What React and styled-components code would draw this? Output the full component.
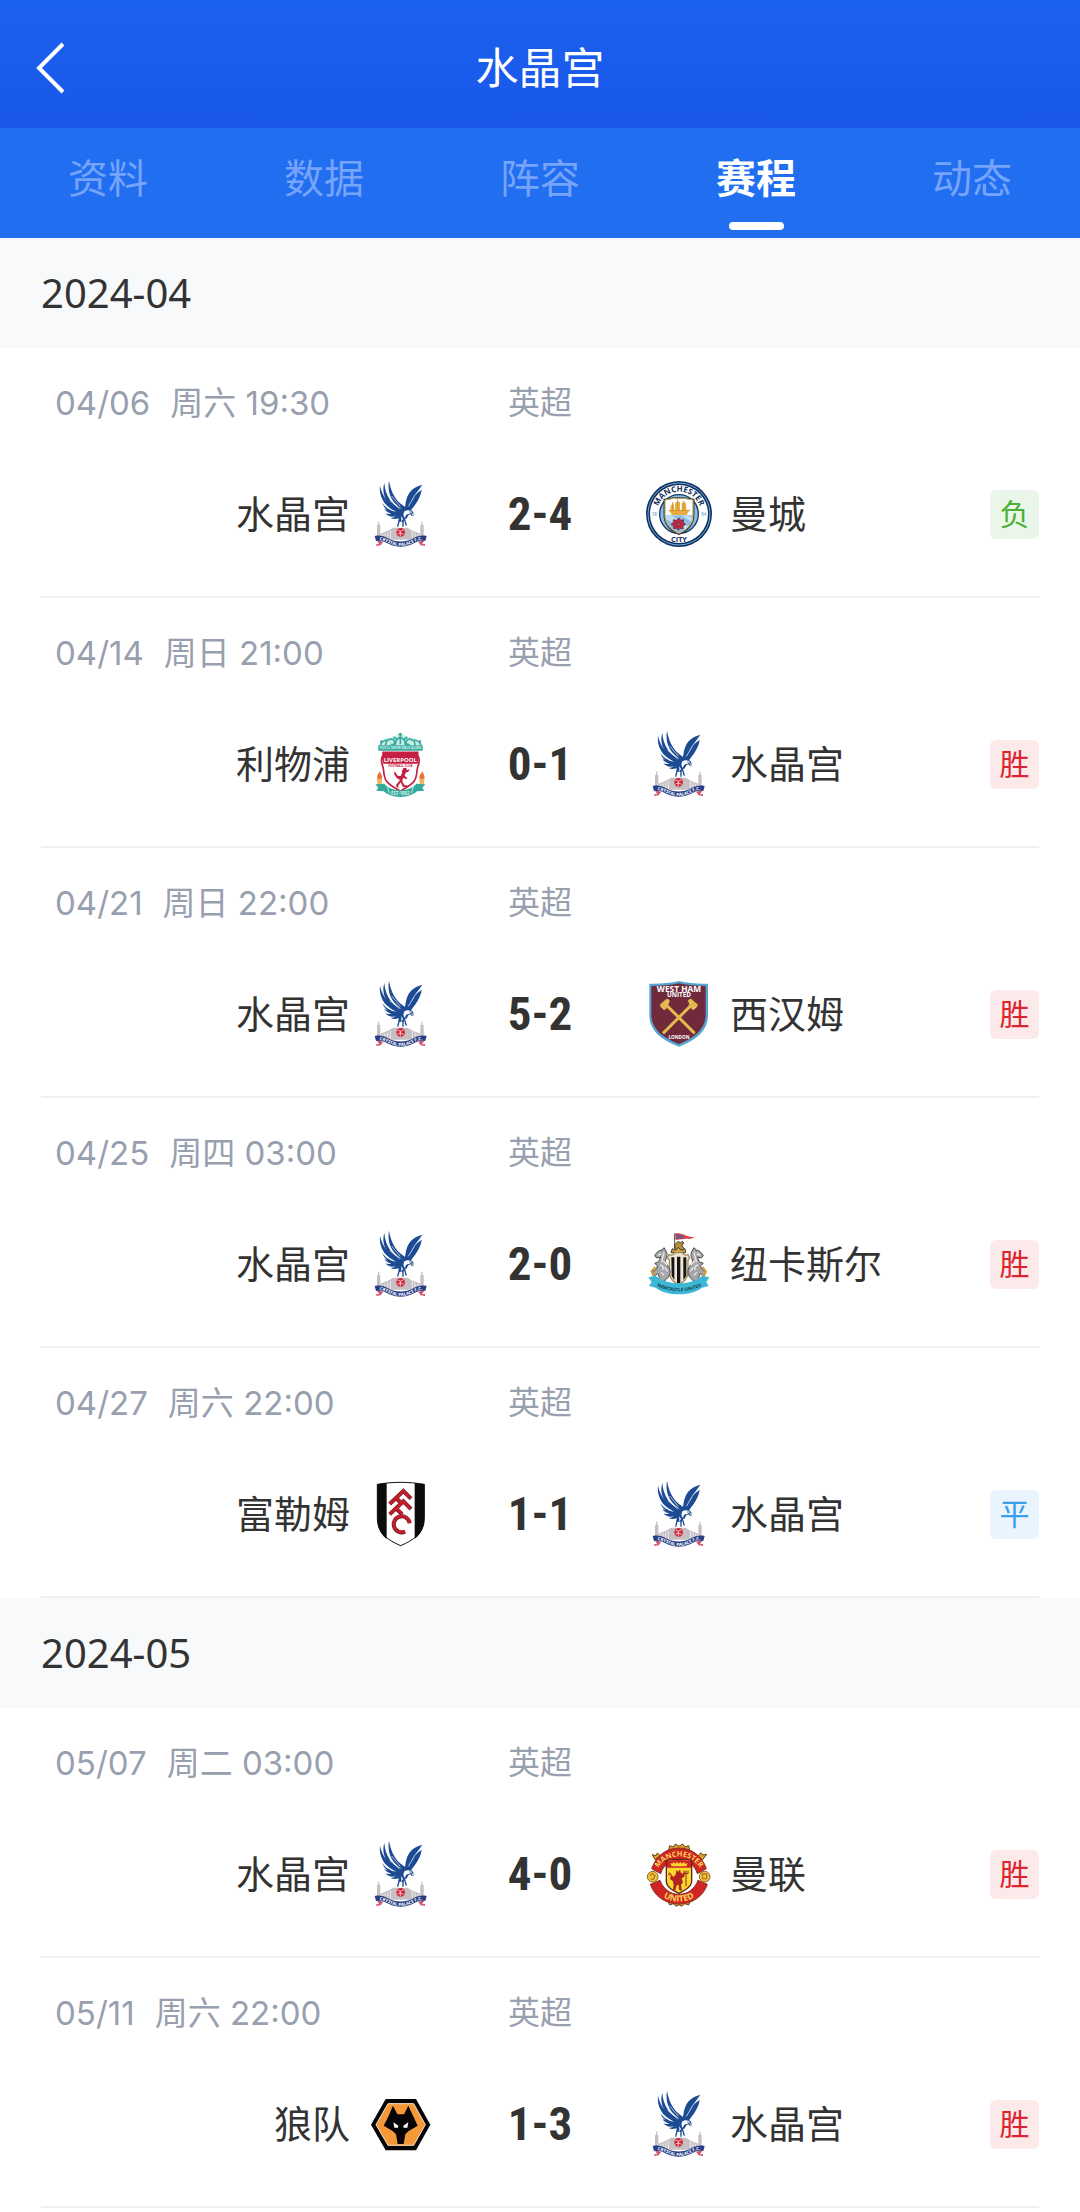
import React from "react";
import styled, { createGlobalStyle } from "styled-components";

const GlobalStyle = createGlobalStyle`
  * {
    box-sizing: border-box;
    margin: 0;
    padding: 0;
  }

  body {
    background-color: #fff;
    color: #333;
    font-family: Inter, "Noto Sans CJK SC", sans-serif;
  }

  button {
    border: none;
    background: none;
    font: inherit;
    cursor: pointer;
  }
`;

const Header = styled.header`
  display: grid;
  grid-template-columns: 1fr auto 1fr;
  align-items: center;
  padding: 36px 24px 28px;
  background: linear-gradient(#1c61ed, #1857e9);
  color: #fff;
`;

const BackButton = styled.button`
  display: flex;
  justify-self: start;
  padding: 4px 8px;
  color: inherit;
`;

const Title = styled.h1`
  font-size: 43px;
  font-weight: 400;
  line-height: 64px;
`;

const Tabs = styled.nav`
  display: grid;
  grid-template-columns: repeat(5, 1fr);
  background-color: #216ef1;
`;

const Tab = styled.button`
  display: flex;
  flex-direction: column;
  align-items: center;
  gap: 15px;
  padding: 23px 0 8px;
  color: ${(props) => (props.$active ? "#fff" : "#75a4fa")};
  font-size: 40px;
  font-weight: ${(props) => (props.$active ? 700 : 400)};
  line-height: 56px;

  &::after {
    content: "";
    width: 55px;
    height: 8px;
    border-radius: 4px;
    background-color: ${(props) => (props.$active ? "#fff" : "transparent")};
  }
`;

const MonthTitle = styled.h2`
  padding: 27px 41px;
  background-color: #f7f9fb;
  font-family: "Noto Sans", sans-serif;
  font-size: 40px;
  font-weight: 400;
  line-height: 56px;
`;

const MatchList = styled.ul`
  list-style: none;
  padding: 0 41px;
`;

const Match = styled.li`
  padding: 33px 0 49px;
  border-bottom: 2px solid #f0f1f3;
`;

const Columns = styled.div`
  display: grid;
  grid-template-columns: 1fr 212px 1fr;
  align-items: center;
`;

const Meta = styled(Columns)`
  margin-bottom: 56px;
  color: #989fae;
  font-size: 33px;
  line-height: 44px;
`;

const Kickoff = styled.time`
  display: flex;
  gap: 20px;
  padding-left: 14px;
`;

const League = styled.span`
  font-size: 32px;
  text-align: center;
`;

const HomeTeam = styled.div`
  display: flex;
  align-items: center;
  justify-content: flex-end;
  gap: 18px;
`;

const AwayTeam = styled.div`
  display: flex;
  align-items: center;
  gap: 18px;
`;

const TeamName = styled.span`
  font-size: 38px;
  line-height: 56px;
`;

const Score = styled.strong`
  font-family: "Roboto Condensed", Roboto, sans-serif;
  font-size: 47px;
  font-weight: 700;
  line-height: 56px;
  text-align: center;
`;

const resultColors = {
  胜: { text: "#da2630", back: "#fce9ea" },
  平: { text: "#3a9fe8", back: "#e9f4fe" },
  负: { text: "#4bb034", back: "#ebf6ea" },
};

const Result = styled.span`
  width: 49px;
  margin-left: auto;
  border-radius: 6px;
  background-color: ${(props) => resultColors[props.$result].back};
  color: ${(props) => resultColors[props.$result].text};
  font-size: 30px;
  line-height: 49px;
  text-align: center;
`;

const Crest = styled.svg`
  display: block;
  flex: none;
  width: 66px;
  height: 66px;
  font-family: "Open Sans", sans-serif;
  font-weight: 700;
`;

function PalaceCrest() {
  return (
    <Crest viewBox="23 46 198 198" aria-hidden="true">
      <g fill="#c5bfc4">
        <path d="M50 178h10v38H50zM180 178h10v38h-10z" />
        <path d="M53 168h4v12h-4zM183 168h4v12h-4z" />
        <path d="M60 204l26-10 12-8h44l12 8 26 10v18H60z" />
      </g>
      <path
        d="M66 206v12m8-15v17m8-19v21m8-26v28m66-28v28m8-23v22m8-18v16m8-13v12"
        stroke="#eeebee"
        strokeWidth="3"
      />
      <g fill="#1c4a93">
        <path d="M86 45c-4 24 0 46 14 63 9 11 22 20 33 29l8-9c-15-9-28-18-37-33-9-14-15-31-18-50z" />
        <path d="M72 52c-7 23-1 44 12 60 12 14 29 23 44 31l5-8c-18-9-35-18-45-34-9-14-15-30-16-49z" />
        <path d="M59 60c-3 23 6 44 19 58 12 13 27 19 44 26l4-7c-19-8-34-17-45-31-10-13-19-28-22-46z" />
        <path d="M66 112c11 17 28 24 48 30l7 6c-22-1-47-11-55-36z" />
        <path d="M186 57c-25 7-38 19-45 36-5 12-6 25-8 39l10 1c3-15 9-29 18-42 8-11 18-23 25-34z" />
        <path d="M184 72c-19 13-30 27-36 41-3 7-4 14-5 22l7 1c13-17 31-38 34-64z" />
        <path d="M173 101c-10 14-21 24-29 36l-6-5c8-15 20-27 35-31z" />
        <path d="M113 136c-13 3-27 0-41-6 5 8 13 12 21 14-6 1-12 1-18-1 8 10 20 12 31 9-5 4-10 5-15 5 11 6 25 2 35-7l12 10 8-15z" />
        <path d="M119 136c10-9 26-9 36-1 5 4 5 8 4 13l-4 4-5-6-11 4c-1 8-6 13-11 18h-13c0-10-2-18 4-32z" />
      </g>
      <path
        d="M133 136c9-4 20-2 22 4l-9 5c-8 0-11 5-12 12-6-6-6-14-1-21zM123 151l5 9-5 8z"
        fill="#fff"
      />
      <path
        d="M118 130l-30-26m56 18l18-29m-42 29l-26-31"
        stroke="#fff"
        strokeWidth="2"
      />
      <circle cx="149" cy="139" r="2" fill="#1c4a93" />
      <path d="M155 141c5 1 7 5 4 12l-6-7z" fill="#adb0b8" />
      <path
        d="M117 163l-5 20m16-20v20m5-20l5 17"
        stroke="#1c4a93"
        strokeWidth="4"
      />
      <circle cx="121" cy="200" r="13" fill="#d3263a" />
      <path
        d="M112 193l8 4 10-5m-10 5v15m-8-7l8-3 10 4"
        stroke="#fff"
        strokeWidth="2"
        fill="none"
      />
      <path
        d="M47 220l10 16-9-1v6l13-2 7-10zM195 220l-10 16 9-1v6l-13-2-7-10z"
        fill="#d3546d"
      />
      <path
        d="M43 211c17-3 27 0 40 7 25 13 51 13 76 0 13-7 23-10 40-7l-4 15c-15-2-24 1-37 8-24 12-50 12-74 0-13-7-22-10-37-8z"
        fill="#293f85"
      />
      <path
        id="palaceBanner"
        d="M53 223c11 0 20 3 32 9 24 12 48 12 72 0 12-6 21-9 34-9"
        fill="none"
      />
      <text fill="#fff" fontSize="13">
        <textPath href="#palaceBanner" startOffset="50%" textAnchor="middle">
          CRYSTAL PALACE F.C.
        </textPath>
      </text>
    </Crest>
  );
}

function CityCrest() {
  return (
    <Crest viewBox="33 46 198 198" aria-hidden="true">
      <circle cx="132" cy="145" r="99" fill="#0d305f" />
      <circle cx="132" cy="145" r="93" fill="none" stroke="#78a9d6" strokeWidth="3" />
      <circle cx="132" cy="145" r="87" fill="#fff" />
      <circle cx="132" cy="145" r="58" fill="#8dbce5" stroke="#163963" strokeWidth="4" />
      <path
        d="M88 102c30-8 58-8 88 0v46c0 28-18 46-44 58-26-12-44-30-44-58z"
        fill="#fff"
        stroke="#303a45"
        strokeWidth="5"
      />
      <path d="M91 149h82c0 26-17 42-41 53-24-11-41-27-41-53z" fill="#8dbce5" />
      <path d="M91 150h20l49 32-8 9-58-30zM140 150h20l12 7v13z" fill="#c2ddf4" />
      <path
        d="M90 103c29-7 55-7 84 0v45c0 27-17 44-42 55-25-11-42-28-42-55z"
        fill="none"
        stroke="#cfb45f"
        strokeWidth="3"
      />
      <path
        d="M104 136h58l-7 12h-45zM108 118l9-2v18h-12zM121 110l14-2v26h-16zM140 113l12-3 3 24h-15z"
        fill="#e7ad40"
      />
      <path
        d="M113 109v28m15-36v36m17-31v31M101 135l64-1"
        stroke="#d2932e"
        strokeWidth="3"
      />
      <path
        d="M132 157l5 7 9-2-1 9 7 5-8 5v8l-9-1-5 6-5-6-9 1v-8l-8-5 7-5v-9l9 2z"
        fill="#bd2843"
        stroke="#4e2439"
        strokeWidth="2"
      />
      <circle cx="131" cy="176" r="5" fill="#e3475c" stroke="#4e2439" strokeWidth="2" />
      <path id="cityTop" d="M68 154a65 65 0 1 1 128 0" fill="none" />
      <text fill="#122f57" fontSize="24">
        <textPath href="#cityTop" startOffset="50%" textAnchor="middle">
          MANCHESTER
        </textPath>
      </text>
      <text x="132" y="228" fill="#122f57" fontSize="22" textAnchor="middle">
        CITY
      </text>
      <g fill="#8ab4da" fontSize="13" textAnchor="middle">
        <text x="58" y="151">18</text>
        <text x="206" y="151">94</text>
      </g>
    </Crest>
  );
}

function LiverpoolCrest() {
  return (
    <Crest viewBox="21 33 198 198" aria-hidden="true">
      <path d="M56 78c5-19 20-25 40-26 5-2 10-6 22-12 13 6 17 10 22 12 20 1 35 7 40 26z" fill="#c9efe8" />
      <g fill="none" stroke="#36aa9c" strokeWidth="5">
        <path d="M58 77c2-12 11-16 21-17m101 17c-2-12-11-16-21-17" />
        <path d="M74 75c0-17 20-23 26-12 4 9-5 14-10 9m72 3c0-17-20-23-26-12-4 9 5 14 10 9" />
        <path d="M103 75c0-13 6-20 15-23 9 3 15 10 15 23m-15-31v29M97 51l9 6m33-6l-9 6" />
      </g>
      <circle cx="118" cy="43" r="5" fill="#36aa9c" />
      <circle cx="61" cy="65" r="4" fill="#36aa9c" />
      <circle cx="177" cy="65" r="4" fill="#36aa9c" />
      <path d="M52 76h133v16H52z" fill="#36aa9c" />
      <text x="118" y="88" fill="#d4f2ec" fontSize="9" textAnchor="middle">
        YOU&apos;LL NEVER WALK ALONE
      </text>
      <path
        d="M66 97h104v10c8 8 5 21 0 34-4 16-1 30-11 43-10 14-27 21-41 29-14-8-31-15-41-29-10-13-7-27-11-43-5-13-8-26 0-34z"
        fill="#fff"
        stroke="#c51f43"
        strokeWidth="5"
      />
      <path d="M67 98h102v8c5 8 4 17 1 25H67c-4-10-6-18 0-25z" fill="#c51f43" />
      <text x="118" y="125" fill="#fff" fontSize="18" textAnchor="middle">
        LIVERPOOL
      </text>
      <text x="118" y="142" fill="#c51f43" fontSize="9" textAnchor="middle">
        FOOTBALL CLUB
      </text>
      <path
        d="M126 145c8-4 12 0 12 6l8-4-4 8-8 3-3 10 9 7-6 2-8-4-2 12 7 11h9l-2 5h-12l-7-14-8 11 3 6-7-2-2-7 12-15-10-6-8-12 2-8 9 13 9 1 5-11c-3-3-2-6 2-8z"
        fill="#c51f43"
      />
      <path d="M47 175h17l-3 20H50zM174 175h17l-3 20h-11z" fill="#edb760" />
      <path
        d="M50 176c-4-9 2-12 5-22 4 8 10 12 8 22zM177 176c-4-9 2-12 7-22 3 8 8 13 6 22z"
        fill="#e76f3a"
      />
      <path
        d="M43 193l27-2c10 12 26 19 48 20 22-1 38-8 48-20l27 2-9 10 6 9-22 2c-14 12-30 17-50 17s-36-5-50-17l-22-2 6-9z"
        fill="#36aa9c"
      />
      <path d="M77 193l8 27m74-27l-8 27" stroke="#bde8df" strokeWidth="3" />
      <text x="118" y="226" fill="#d4f2ec" fontSize="13" textAnchor="middle">
        EST·1892
      </text>
    </Crest>
  );
}

function WestHamCrest() {
  return (
    <Crest viewBox="33 48 198 198" aria-hidden="true">
      <path
        d="M43 56c29 1 62-1 89-8 27 7 58 9 87 8v95c0 48-39 76-87 94-48-18-89-46-89-94z"
        fill="#54a4d1"
      />
      <path
        d="M49 63c30 0 58-2 83-8 26 6 53 8 80 8v86c0 45-36 70-80 88-45-18-83-43-83-88z"
        fill="#702a3c"
      />
      <g fill="#fff" textAnchor="middle">
        <text x="132" y="81" fontSize="25">WEST HAM</text>
        <text x="132" y="97" fontSize="19">UNITED</text>
        <text x="132" y="222" fontSize="14">LONDON</text>
      </g>
      <path d="M92 118l87 87M171 118l-87 87" stroke="#e5b84b" strokeWidth="9" />
      <path
        d="M74 119l21-18c5 1 9 4 10 8l-13 14 5 6-10 7-5-7zM189 119l-21-18c-5 1-9 4-10 8l13 14-5 6 10 7 5-7z"
        fill="#e5b84b"
      />
      <path
        d="M76 123l9 8m9-20l8 7m85 5l-9 8m-9-20l-8 7"
        stroke="#f6dc88"
        strokeWidth="3"
      />
    </Crest>
  );
}

function NewcastleCrest() {
  return (
    <Crest viewBox="33 33 198 198" aria-hidden="true">
      <path d="M119 40v46" stroke="#5b4b3b" strokeWidth="3" />
      <path d="M121 40c14-2 24 3 38 9l21 4-17 4c-16-3-27 3-42 2z" fill="#db4047" />
      <path d="M122 42l23 14m0-9l-21 9" stroke="#45639c" strokeWidth="4" />
      <path d="M121 95l-2-20 9-10 9 3 5-4 4 5-5 8 5 8-3 11z" fill="#b58e42" stroke="#493a29" strokeWidth="3" />
      <path d="M108 98l4-12 9 5 9-9 9 9 11-5 2 12z" fill="#d5a445" stroke="#403a35" strokeWidth="3" />
      <path
        d="M102 104c8 3 14 1 17-6h23c4 7 9 9 17 6l5 9-5 7v40c-2 17-13 25-28 35-15-10-26-18-28-35v-40l-6-7z"
        fill="#eee6d3"
        stroke="#a18a58"
        strokeWidth="4"
      />
      <path
        d="M109 112h9v68l-8-12zM126 110h10v78l-5 3-5-3zM145 112h9v56l-9 12z"
        fill="#16161a"
      />
      <path
        d="M94 95l-7-12-6 7c-13 2-18 10-22 18l7 6 11-3-6 14-12 5 9 8-6 11-11 10 10 8 7-7 5 12-14 14 20 1c15-6 29-20 26-36-2-12-12-17-14-26 2-12 8-18 3-30z"
        fill="#a6a5a8"
        stroke="#4c4c50"
        strokeWidth="3"
      />
      <path
        d="M69 106l9-5m8-4c3 10-8 18-5 30m4-4l12 12m-22 0c9 1 11 8 8 15m6-8l9 12m-19 3l8 9"
        stroke="#ececee"
        strokeWidth="4"
        fill="none"
      />
      <path
        d="M170 95l7-12 6 7c13 2 18 10 22 18l-7 6-11-3 6 14 12 5-9 8 6 11 11 10-10 8-7-7-5 12 14 14-20 1c-15-6-29-20-26-36 2-12 12-17 14-26-2-12-8-18-3-30z"
        fill="#a6a5a8"
        stroke="#4c4c50"
        strokeWidth="3"
      />
      <path
        d="M195 106l-9-5m-8-4c-3 10 8 18 5 30m-4-4l-12 12m22 0c-9 1-11 8-8 15m-6-8l-9 12m19 3l-8 9"
        stroke="#ececee"
        strokeWidth="4"
        fill="none"
      />
      <path d="M61 142l-11 12 7 16 13 8M202 142l10 12-7 16-12 8" stroke="#cc9d3a" strokeWidth="7" fill="none" />
      <path
        d="M40 172l22-5c12 12 39 23 70 23s58-11 70-23l21 5-9 14 7 12-20 5c-19 14-43 20-69 20-27 0-51-6-70-20l-20-5 8-12z"
        fill="#3cb7d5"
      />
      <path id="newcastleBanner" d="M65 198c40 21 94 21 135 0" fill="none" />
      <text fill="#173c51" fontSize="14">
        <textPath href="#newcastleBanner" startOffset="50%" textAnchor="middle">
          NEWCASTLE UNITED
        </textPath>
      </text>
    </Crest>
  );
}

function FulhamCrest() {
  return (
    <Crest viewBox="21 33 198 198" aria-hidden="true">
      <path
        d="M49 43c47-8 94-8 141 0v102c0 45-34 66-71 82-37-16-70-37-70-82z"
        fill="#fff"
        stroke="#111"
        strokeWidth="3"
      />
      <path
        d="M49 43l28-4v168c-18-14-28-33-28-62zM161 39l29 4v102c0 29-11 48-29 62z"
        fill="#0c0c0e"
      />
      <g fill="none" stroke="#6e1720" strokeWidth="12">
        <path d="M86 102l41-39 23 23M105 84l18 18" />
        <path d="M86 133l41-39 23 23M105 115l18 18" />
        <path d="M146 160a24 24 0 1 0-14 25" />
      </g>
      <g fill="none" stroke="#bf202c" strokeWidth="9">
        <path d="M87 101l40-38 22 22M106 83l17 17" />
        <path d="M87 132l40-38 22 22M106 114l17 17" />
        <path d="M146 159a24 24 0 1 0-14 25" />
      </g>
    </Crest>
  );
}

function UnitedCrest() {
  return (
    <Crest viewBox="33 30 198 198" aria-hidden="true">
      <g fill="#dda52b" stroke="#66401b" strokeWidth="3">
        <path d="M101 56l3-12 11 4 6-9 11 7 11-7 6 9 12-4 3 12z" />
        <path d="M99 212l5 10 11-4 8 8 9-5 9 5 8-8 12 4 4-10z" />
        <path d="M60 86l-8-15 11 3 4-8 9 8zM203 86l12-16-12 2-5-7-10 11z" />
      </g>
      <path
        d="M50 113C62 77 92 51 132 51s70 26 82 62l-27 15c-8-25-28-43-55-43s-47 18-55 43z"
        fill="#d02523"
        stroke="#8b3220"
        strokeWidth="3"
      />
      <path
        d="M46 160l29-12c9 25 30 42 57 42s48-17 57-42l28 12c-11 34-43 59-85 59s-75-25-86-59z"
        fill="#d02523"
        stroke="#8b3220"
        strokeWidth="3"
      />
      <circle cx="53" cy="137" r="16" fill="#eec33a" stroke="#906329" strokeWidth="3" />
      <circle cx="209" cy="137" r="16" fill="#eec33a" stroke="#906329" strokeWidth="3" />
      <path d="M45 134l7-7 8 7-5 11h-8M202 129h13v14h-12z" fill="none" stroke="#b67829" strokeWidth="4" />
      <path
        d="M94 88c27-4 50-4 76 0v65c-3 16-19 24-38 34-20-10-36-18-38-34z"
        fill="#f9d72d"
        stroke="#62251a"
        strokeWidth="4"
      />
      <path d="M96 90c25-4 47-4 72 0v20H96z" fill="#d02523" />
      <path d="M110 106h44l4-9-8 1-3-5-6 5-5-5-5 5-5-5-5 5-6-5-3 5-6-1z" fill="#f9d72d" />
      <path
        d="M124 117l5 5 6-6 2 8 6 5 7-9-2 17-8 5 4 12-6 8 3 17-9-2-1-16-6 2-4 15-8 3 3-18-2-12-9-7 3-14 7 8 7-7z"
        fill="#b32421"
      />
      <path d="M153 119v47m-6-47v9h12v-9M108 132l-5-8m2 8l-6-3" stroke="#8f2b21" strokeWidth="3" fill="none" />
      <path id="unitedTop" d="M64 122C76 93 102 76 132 76s56 17 68 46" fill="none" />
      <path id="unitedBottom" d="M56 166c15 30 44 46 76 46s61-16 76-46" fill="none" />
      <g fill="#f9d75a">
        <text fontSize="22">
          <textPath href="#unitedTop" startOffset="50%" textAnchor="middle">
            MANCHESTER
          </textPath>
        </text>
        <text fontSize="26">
          <textPath href="#unitedBottom" startOffset="50%" textAnchor="middle">
            UNITED
          </textPath>
        </text>
      </g>
    </Crest>
  );
}

function WolvesCrest() {
  return (
    <Crest viewBox="37 30 198 198" aria-hidden="true">
      <path d="M90 54h91l43 77-43 77H90l-44-77z" fill="#050505" />
      <path
        d="M97 68h77l35 63-35 62H97l-36-62z"
        fill="#f59837"
        stroke="#fbe5cc"
        strokeWidth="3"
      />
      <path
        d="M112 74l13 26h20l13-26 16 35 12 25-27 16-10 10-5 29h-18l-5-29-10-10-27-16 13-25z"
        fill="#050505"
      />
      <path d="M113 124l15 10-1 6h-11zM158 124l-15 10 1 6h11z" fill="#fff" />
    </Crest>
  );
}

const teams = {
  水晶宫: PalaceCrest,
  曼城: CityCrest,
  利物浦: LiverpoolCrest,
  西汉姆: WestHamCrest,
  纽卡斯尔: NewcastleCrest,
  富勒姆: FulhamCrest,
  曼联: UnitedCrest,
  狼队: WolvesCrest,
};

const tabs = ["资料", "数据", "阵容", "赛程", "动态"];

const months = [
  {
    month: "2024-04",
    matches: [
      { date: "04/06", time: "周六 19:30", home: "水晶宫", away: "曼城", score: "2-4", result: "负" },
      { date: "04/14", time: "周日 21:00", home: "利物浦", away: "水晶宫", score: "0-1", result: "胜" },
      { date: "04/21", time: "周日 22:00", home: "水晶宫", away: "西汉姆", score: "5-2", result: "胜" },
      { date: "04/25", time: "周四 03:00", home: "水晶宫", away: "纽卡斯尔", score: "2-0", result: "胜" },
      { date: "04/27", time: "周六 22:00", home: "富勒姆", away: "水晶宫", score: "1-1", result: "平" },
    ],
  },
  {
    month: "2024-05",
    matches: [
      { date: "05/07", time: "周二 03:00", home: "水晶宫", away: "曼联", score: "4-0", result: "胜" },
      { date: "05/11", time: "周六 22:00", home: "狼队", away: "水晶宫", score: "1-3", result: "胜" },
    ],
  },
];

function MatchItem({ match }) {
  const HomeCrest = teams[match.home];
  const AwayCrest = teams[match.away];

  return (
    <Match>
      <Meta>
        <Kickoff>
          <span>{match.date}</span>
          <span>{match.time}</span>
        </Kickoff>
        <League>英超</League>
      </Meta>
      <Columns>
        <HomeTeam>
          <TeamName>{match.home}</TeamName>
          <HomeCrest />
        </HomeTeam>
        <Score>{match.score}</Score>
        <AwayTeam>
          <AwayCrest />
          <TeamName>{match.away}</TeamName>
          <Result $result={match.result}>{match.result}</Result>
        </AwayTeam>
      </Columns>
    </Match>
  );
}

export default function App() {
  const [activeTab, setActiveTab] = React.useState("赛程");

  return (
    <>
      <GlobalStyle />
      <Header>
        <BackButton aria-label="返回">
          <svg width="36" height="56" viewBox="0 0 36 56" fill="none">
            <path d="M31 4L7 28l24 24" stroke="currentColor" strokeWidth="4" />
          </svg>
        </BackButton>
        <Title>水晶宫</Title>
      </Header>
      <Tabs>
        {tabs.map((tab) => (
          <Tab
            key={tab}
            $active={tab === activeTab}
            onClick={() => setActiveTab(tab)}
          >
            {tab}
          </Tab>
        ))}
      </Tabs>
      <main>
        {months.map(({ month, matches }) => (
          <section key={month}>
            <MonthTitle>{month}</MonthTitle>
            <MatchList>
              {matches.map((match) => (
                <MatchItem key={match.date} match={match} />
              ))}
            </MatchList>
          </section>
        ))}
      </main>
    </>
  );
}
